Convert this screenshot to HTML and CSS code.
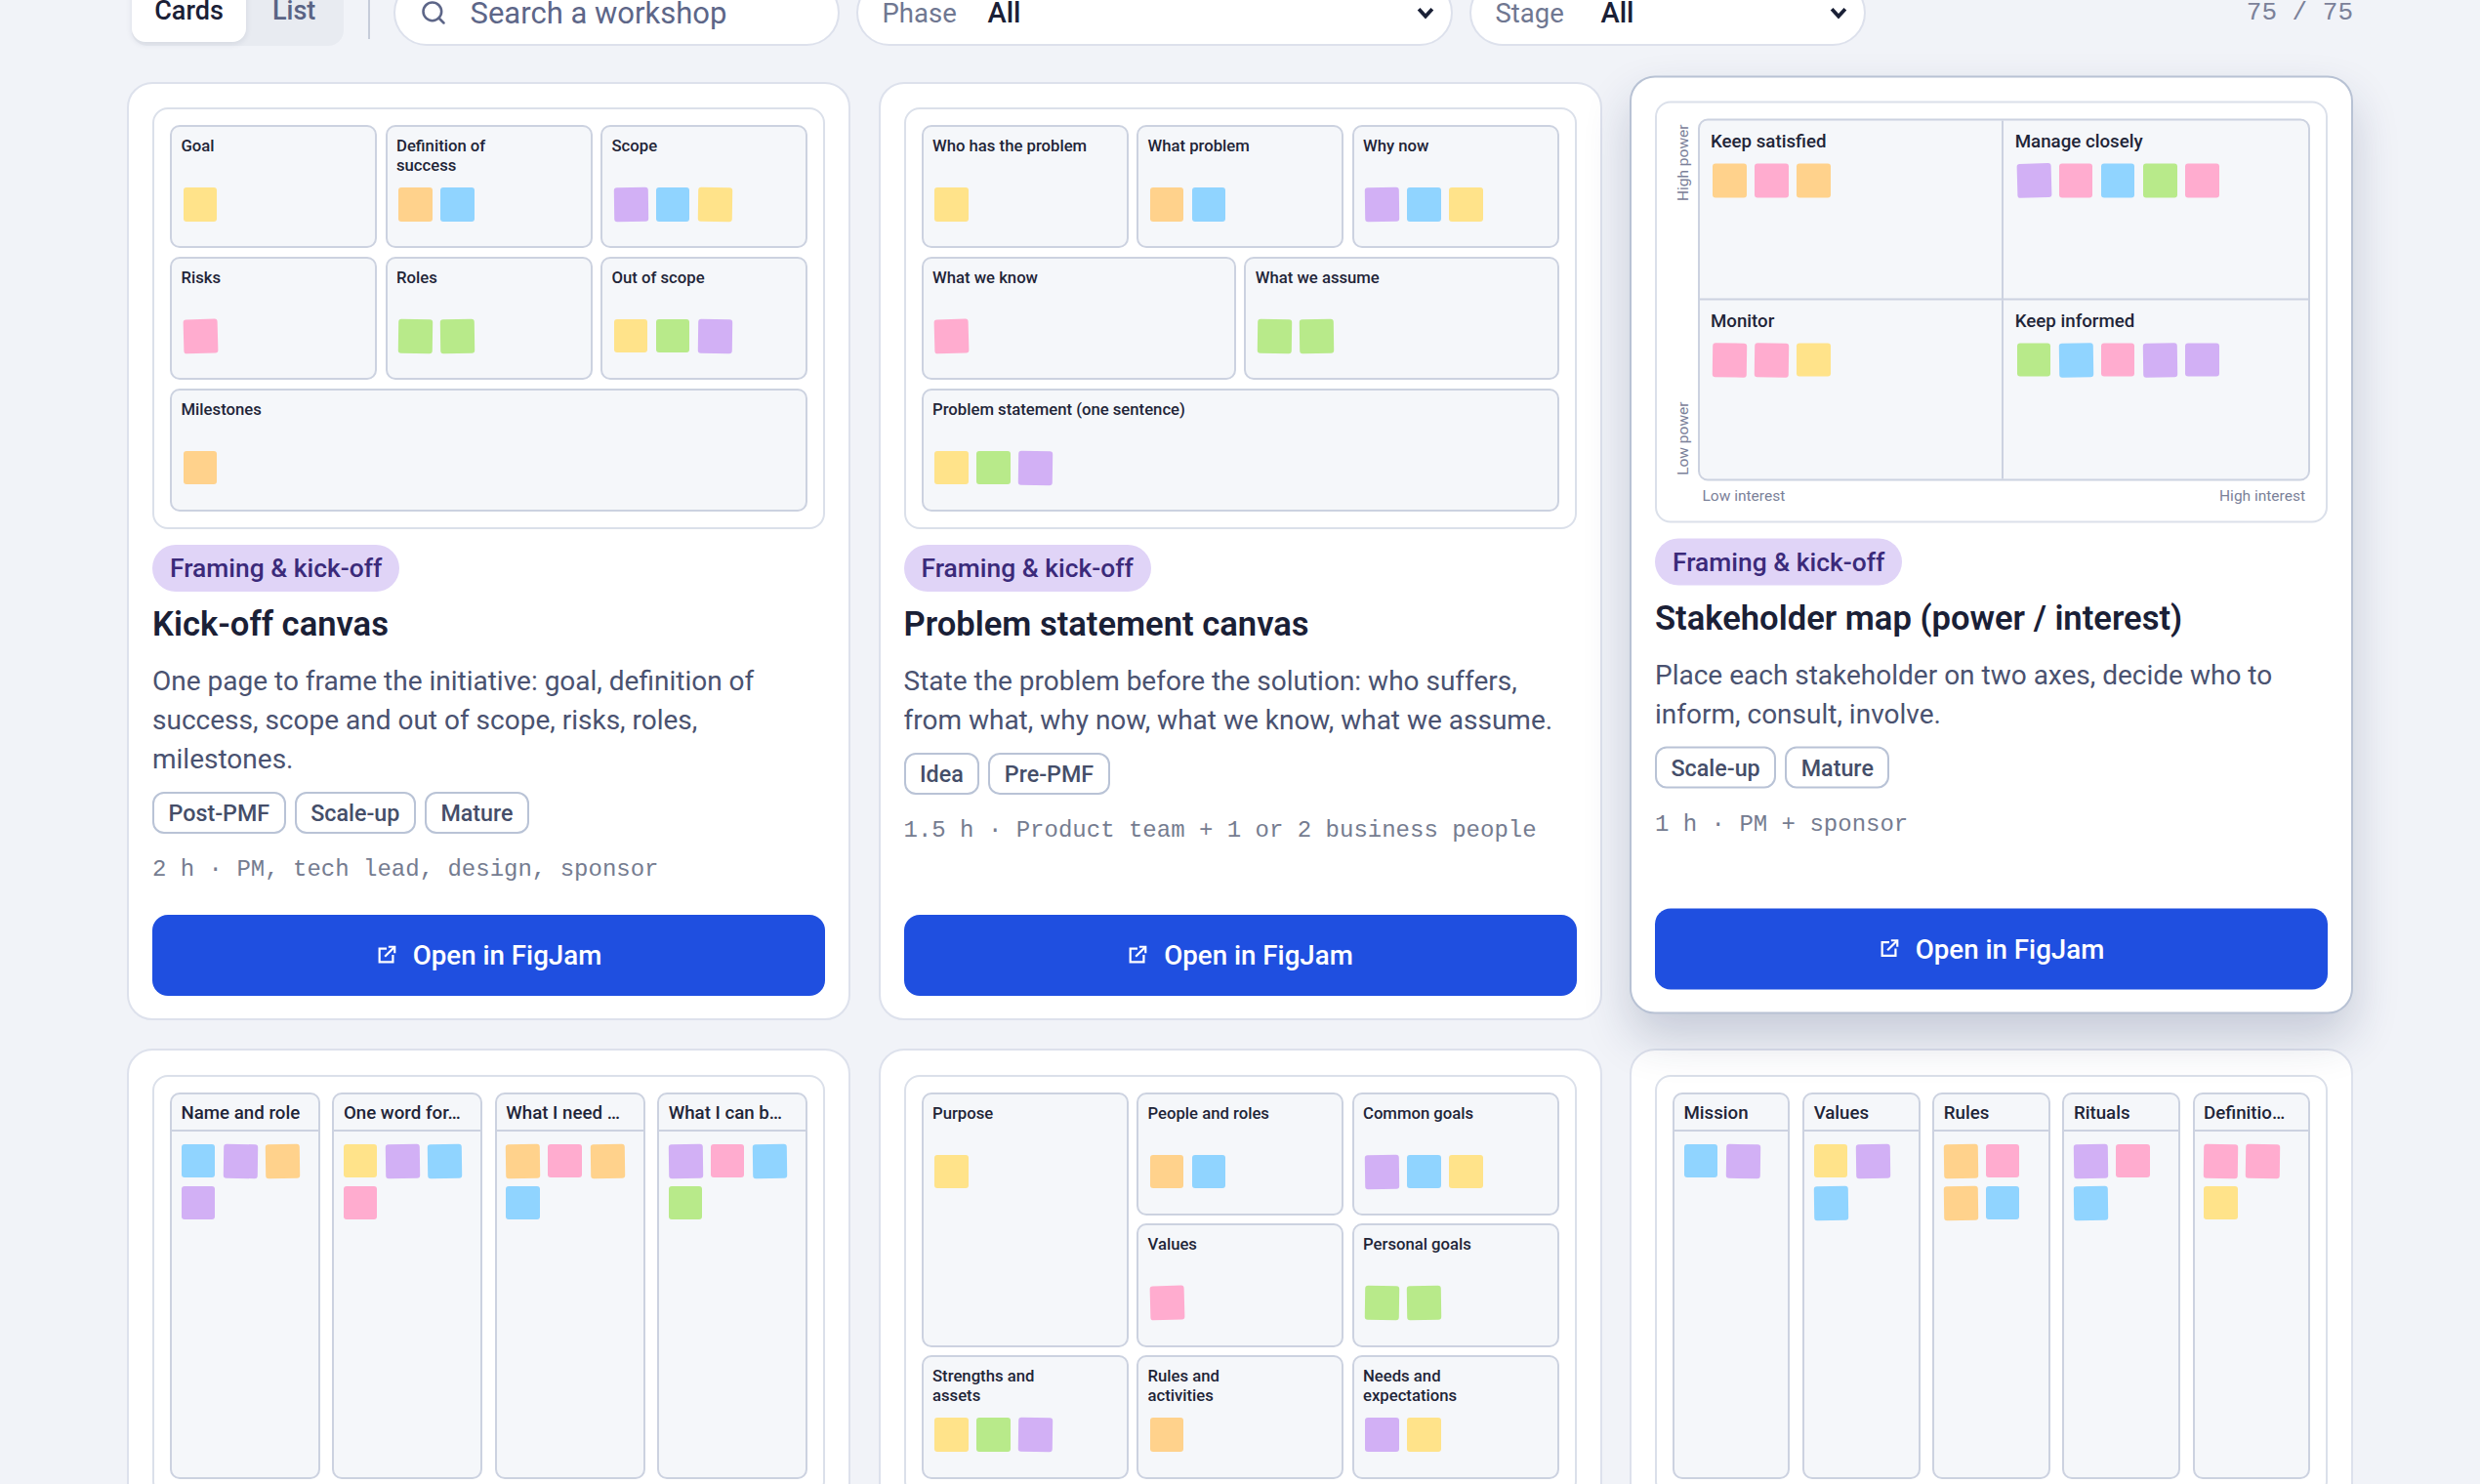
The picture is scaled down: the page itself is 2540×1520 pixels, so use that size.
FILE: index.html
```html
<!DOCTYPE html>
<html lang="en">
	<head>
		<meta charset="utf-8">
		<title>Workshop library</title>
		<link rel="stylesheet" href="styles.css">
	</head>
	<body>
		<div class="page">
			<div class="toolbar">
				<div class="segment">
					<button class="segment-btn active">Cards</button>
					<button class="segment-btn">List</button>
				</div>
				<div class="divider"></div>
				<div class="search">
					<svg class="search-icon" viewBox="0 0 24 24" fill="none" stroke="currentColor" stroke-width="2.2" stroke-linecap="round"><circle cx="11" cy="11" r="8"></circle><path d="M21 21l-4.3-4.3"></path></svg>
					<span>Search a workshop</span>
				</div>
				<div class="select select-phase">
					<span class="select-label">Phase</span>
					<span class="select-value">All</span>
					<svg class="chevron" viewBox="0 0 16 16" fill="none" stroke="currentColor" stroke-width="3"><path d="M2.5 5l5.500 6 5.500-6"></path></svg>
				</div>
				<div class="select select-stage">
					<span class="select-label">Stage</span>
					<span class="select-value">All</span>
					<svg class="chevron" viewBox="0 0 16 16" fill="none" stroke="currentColor" stroke-width="3"><path d="M2.5 5l5.500 6 5.500-6"></path></svg>
				</div>
				<div class="count">75 / 75</div>
			</div>

			<div class="cards">
				<article class="card">
					<div class="preview">
						<div class="board">
							<div class="cell third"><div class="cell-label">Goal</div><div class="stickies"><i class="sticky y"></i></div></div>
							<div class="cell third"><div class="cell-label">Definition of<br>success</div><div class="stickies"><i class="sticky o"></i><i class="sticky b"></i></div></div>
							<div class="cell third"><div class="cell-label">Scope</div><div class="stickies"><i class="sticky p tls"></i><i class="sticky b"></i><i class="sticky y trs"></i></div></div>
							<div class="cell third"><div class="cell-label">Risks</div><div class="stickies"><i class="sticky k tl"></i></div></div>
							<div class="cell third"><div class="cell-label">Roles</div><div class="stickies"><i class="sticky g trs"></i><i class="sticky g tls"></i></div></div>
							<div class="cell third"><div class="cell-label">Out of scope</div><div class="stickies"><i class="sticky y"></i><i class="sticky g"></i><i class="sticky p trs"></i></div></div>
							<div class="cell full"><div class="cell-label">Milestones</div><div class="stickies"><i class="sticky o"></i></div></div>
						</div>
					</div>
					<span class="tag">Framing &amp; kick-off</span>
					<h2 class="title">Kick-off canvas</h2>
					<p class="desc">One page to frame the initiative: goal, definition of success, scope and out of scope, risks, roles, milestones.</p>
					<div class="pills"><span class="pill">Post-PMF</span><span class="pill">Scale-up</span><span class="pill">Mature</span></div>
					<div class="meta">2 h · PM, tech lead, design, sponsor</div>
					<a class="open-btn"><svg class="open-icon" viewBox="0 0 24 24" fill="none" stroke="currentColor" stroke-width="2.4"><path d="M12 5H4v15h15v-8"></path><path d="M10 14L21 3"></path><path d="M14 3h7v7"></path></svg>Open in FigJam</a>
				</article>

				<article class="card">
					<div class="preview">
						<div class="board">
							<div class="cell third"><div class="cell-label">Who has the problem</div><div class="stickies"><i class="sticky y"></i></div></div>
							<div class="cell third"><div class="cell-label">What problem</div><div class="stickies"><i class="sticky o"></i><i class="sticky b"></i></div></div>
							<div class="cell third"><div class="cell-label">Why now</div><div class="stickies"><i class="sticky p tls"></i><i class="sticky b"></i><i class="sticky y"></i></div></div>
							<div class="cell half"><div class="cell-label">What we know</div><div class="stickies"><i class="sticky k tl"></i></div></div>
							<div class="cell half"><div class="cell-label">What we assume</div><div class="stickies"><i class="sticky g trs"></i><i class="sticky g tls"></i></div></div>
							<div class="cell full"><div class="cell-label">Problem statement (one sentence)</div><div class="stickies"><i class="sticky y"></i><i class="sticky g"></i><i class="sticky p trs"></i></div></div>
						</div>
					</div>
					<span class="tag">Framing &amp; kick-off</span>
					<h2 class="title">Problem statement canvas</h2>
					<p class="desc">State the problem before the solution: who suffers, from what, why now, what we know, what we assume.</p>
					<div class="pills"><span class="pill">Idea</span><span class="pill">Pre-PMF</span></div>
					<div class="meta">1.5 h · Product team + 1 or 2 business people</div>
					<a class="open-btn"><svg class="open-icon" viewBox="0 0 24 24" fill="none" stroke="currentColor" stroke-width="2.4"><path d="M12 5H4v15h15v-8"></path><path d="M10 14L21 3"></path><path d="M14 3h7v7"></path></svg>Open in FigJam</a>
				</article>

				<article class="card raised">
					<div class="preview">
						<div class="matrix-wrap">
							<div class="y-axis"><span>High power</span><span>Low power</span></div>
							<div class="matrix">
								<div class="quad"><div class="quad-label">Keep satisfied</div><div class="stickies"><i class="sticky o"></i><i class="sticky k"></i><i class="sticky o"></i></div></div>
								<div class="quad"><div class="quad-label">Manage closely</div><div class="stickies"><i class="sticky p tl"></i><i class="sticky k"></i><i class="sticky b"></i><i class="sticky g"></i><i class="sticky k"></i></div></div>
								<div class="quad"><div class="quad-label">Monitor</div><div class="stickies"><i class="sticky k trs"></i><i class="sticky k trs"></i><i class="sticky y"></i></div></div>
								<div class="quad"><div class="quad-label">Keep informed</div><div class="stickies"><i class="sticky g"></i><i class="sticky b tls"></i><i class="sticky k"></i><i class="sticky p tls"></i><i class="sticky p"></i></div></div>
							</div>
							<div class="x-axis"><span>Low interest</span><span>High interest</span></div>
						</div>
					</div>
					<span class="tag">Framing &amp; kick-off</span>
					<h2 class="title">Stakeholder map (power / interest)</h2>
					<p class="desc">Place each stakeholder on two axes, decide who to inform, consult, involve.</p>
					<div class="pills"><span class="pill">Scale-up</span><span class="pill">Mature</span></div>
					<div class="meta">1 h · PM + sponsor</div>
					<a class="open-btn"><svg class="open-icon" viewBox="0 0 24 24" fill="none" stroke="currentColor" stroke-width="2.4"><path d="M12 5H4v15h15v-8"></path><path d="M10 14L21 3"></path><path d="M14 3h7v7"></path></svg>Open in FigJam</a>
				</article>

				<article class="card">
					<div class="preview">
						<div class="columns">
							<div class="col"><div class="col-head">Name and role</div><div class="col-body"><i class="sticky b"></i><i class="sticky p trs"></i><i class="sticky o tls"></i><i class="sticky p"></i></div></div>
							<div class="col"><div class="col-head">One word for…</div><div class="col-body"><i class="sticky y"></i><i class="sticky p tls"></i><i class="sticky b tls"></i><i class="sticky k"></i></div></div>
							<div class="col"><div class="col-head">What I need …</div><div class="col-body"><i class="sticky o tls"></i><i class="sticky k"></i><i class="sticky o tls"></i><i class="sticky b"></i></div></div>
							<div class="col"><div class="col-head">What I can b…</div><div class="col-body"><i class="sticky p tls"></i><i class="sticky k"></i><i class="sticky b tls"></i><i class="sticky g"></i></div></div>
						</div>
					</div>
				</article>

				<article class="card">
					<div class="preview">
						<div class="board">
							<div class="cell third tall"><div class="cell-label">Purpose</div><div class="stickies"><i class="sticky y"></i></div></div>
							<div class="cell third"><div class="cell-label">People and roles</div><div class="stickies"><i class="sticky o"></i><i class="sticky b"></i></div></div>
							<div class="cell third"><div class="cell-label">Common goals</div><div class="stickies"><i class="sticky p tls"></i><i class="sticky b"></i><i class="sticky y"></i></div></div>
							<div class="cell third"><div class="cell-label">Values</div><div class="stickies"><i class="sticky k tl"></i></div></div>
							<div class="cell third"><div class="cell-label">Personal goals</div><div class="stickies"><i class="sticky g trs"></i><i class="sticky g tls"></i></div></div>
							<div class="cell third"><div class="cell-label">Strengths and<br>assets</div><div class="stickies"><i class="sticky y"></i><i class="sticky g"></i><i class="sticky p trs"></i></div></div>
							<div class="cell third"><div class="cell-label">Rules and<br>activities</div><div class="stickies"><i class="sticky o"></i></div></div>
							<div class="cell third"><div class="cell-label">Needs and<br>expectations</div><div class="stickies"><i class="sticky p"></i><i class="sticky y"></i></div></div>
						</div>
					</div>
				</article>

				<article class="card">
					<div class="preview">
						<div class="columns">
							<div class="col"><div class="col-head">Mission</div><div class="col-body"><i class="sticky b"></i><i class="sticky p trs"></i></div></div>
							<div class="col"><div class="col-head">Values</div><div class="col-body"><i class="sticky y"></i><i class="sticky p tls"></i><i class="sticky b tls"></i></div></div>
							<div class="col"><div class="col-head">Rules</div><div class="col-body"><i class="sticky o tls"></i><i class="sticky k"></i><i class="sticky o tls"></i><i class="sticky b"></i></div></div>
							<div class="col"><div class="col-head">Rituals</div><div class="col-body"><i class="sticky p tls"></i><i class="sticky k"></i><i class="sticky b tls"></i></div></div>
							<div class="col"><div class="col-head">Definitio…</div><div class="col-body"><i class="sticky k trs"></i><i class="sticky k trs"></i><i class="sticky y"></i></div></div>
						</div>
					</div>
				</article>
			</div>
		</div>
	</body>
</html>
```

FILE: styles.css
```css
* {
	box-sizing: border-box;
}

html,
body {
	height: 100%;
	margin: 0;
	overflow: hidden;
}

body {
	font-family: Roboto, "Liberation Sans", sans-serif;
	background-color: #f1f3f8;
	color: #1a2036;
}

.page {
	margin-top: -21px;
	padding: 0 130px;
}

/* toolbar, scrolled partly out of view */
.toolbar {
	display: flex;
	align-items: center;
	height: 68px;
	margin-bottom: 36.5px;
}

.segment {
	display: flex;
	width: 217px;
	height: 67px;
	margin-left: 5px;
	padding: 0 0 4px 0;
	background-color: #e8ebf1;
	border-radius: 16px;
}

.segment-btn {
	border: none;
	background: none;
	font: 500 27px Roboto, sans-serif;
	color: #5a6384;
	padding: 0 27px;
}

.segment-btn.active {
	width: 117px;
	padding: 0 22px;
	background-color: #fff;
	color: #1a2036;
	border-radius: 14px;
	box-shadow: 0 2px 6px rgba(30, 40, 80, 0.1);
}

.divider {
	width: 2px;
	height: 54px;
	margin: 0 24px 0 24.5px;
	background-color: #c6ccda;
}

.search,
.select {
	display: flex;
	align-items: center;
	height: 68px;
	background-color: #fff;
	border: 2px solid #dde1ec;
	border-radius: 34px;
	font-size: 27.5px;
}

.search {
	width: 457px;
	padding-left: 25px;
	font-size: 31px;
	color: #5d6688;
}

.search-icon {
	width: 28px;
	height: 28px;
	margin-right: 24px;
}

.select {
	margin-left: 17px;
	padding: 0 16px 0 25px;
}

.select-phase {
	width: 611px;
}

.select-stage {
	width: 406px;
}

.select-label {
	color: #6f7791;
	width: 108px;
}

.select-value {
	font-size: 29px;
	font-weight: 500;
	color: #1a2036;
	flex: 1;
}

.chevron {
	width: 20px;
	height: 20px;
	color: #1a2036;
}

.count {
	margin-left: auto;
	font: 26px "Liberation Mono", monospace;
	color: #7b8199;
}

/* cards */
.cards {
	display: grid;
	grid-template-columns: repeat(3, 1fr);
	gap: 29px 28.5px;
}

.card {
	display: flex;
	flex-direction: column;
	align-items: flex-start;
	height: 961.5px;
	padding: 24.5px 24px 23.5px;
	background-color: #fff;
	border: 2px solid #dde1ec;
	border-radius: 26px;
}

.card.raised {
	position: relative;
	z-index: 1;
	transform: translateY(-6.5px);
	border-color: #b8c2d4;
	box-shadow: 0 24px 48px rgba(30, 45, 90, 0.2);
}

.preview {
	width: 100%;
	height: 432px;
	padding: 16px;
	flex-shrink: 0;
	background-color: #fff;
	border: 2px solid #dbe0ea;
	border-radius: 16px;
}

.board {
	display: grid;
	grid-template-columns: repeat(6, 1fr);
	grid-template-rows: repeat(3, 1fr);
	gap: 8.5px;
	height: 100%;
}

.cell {
	min-width: 0;
	padding: 10px 9.5px;
	background-color: #f5f7fa;
	border: 2px solid #ccd2e0;
	border-radius: 10px;
}

.third {
	grid-column: span 2;
}

.half {
	grid-column: span 3;
}

.full {
	grid-column: span 6;
}

.tall {
	grid-row: span 2;
}

.cell-label {
	min-height: 39px;
	margin-bottom: 13px;
	font-size: 16.7px;
	font-weight: 500;
	line-height: 19.5px;
	color: #1f2538;
}

.stickies,
.col-body {
	display: flex;
	flex-wrap: wrap;
	gap: 8.6px;
}

.stickies {
	padding-left: 2px;
}

.sticky {
	display: block;
	width: 34.5px;
	height: 34.5px;
	border-radius: 3px;
}

.y { background-color: #ffe38a; }
.o { background-color: #ffd28c; }
.b { background-color: #90d4ff; }
.p { background-color: #d2b0f5; }
.k { background-color: #ffaccf; }
.g { background-color: #b8ea8a; }

.tl { transform: rotate(-1.5deg); }
.tr { transform: rotate(1.5deg); }
.tls { transform: rotate(-0.8deg); }
.trs { transform: rotate(0.8deg); }

/* stakeholder matrix */
.matrix-wrap {
	display: grid;
	grid-template-columns: 25.5px 1fr;
	grid-template-rows: 1fr 25px;
	height: 100%;
}

.y-axis {
	display: flex;
	flex-direction: column;
	justify-content: space-between;
	align-items: flex-start;
	padding: 6px 0;
	font-size: 15.5px;
	color: #7b8199;
}

.y-axis span {
	writing-mode: vertical-rl;
	transform: rotate(180deg);
	line-height: 22px;
}

.matrix {
	display: grid;
	grid-template-columns: 1fr 1fr;
	grid-template-rows: 1fr 1fr;
	background-color: #f5f7fa;
	border: 2px solid #ccd2e0;
	border-radius: 10px;
}

.quad {
	padding: 10px 11.5px;
}

.quad:nth-child(odd) {
	border-right: 2px solid #ccd2e0;
}

.quad:nth-child(-n+2) {
	border-bottom: 2px solid #ccd2e0;
}

.quad-label {
	margin-bottom: 12px;
	font-size: 18.7px;
	font-weight: 500;
	line-height: 22px;
	color: #1f2538;
}

.x-axis {
	grid-column: 2;
	display: flex;
	justify-content: space-between;
	padding: 4px 5px 0 5px;
	font-size: 15.5px;
	line-height: 22px;
	color: #7b8199;
}

/* kanban style previews */
.columns {
	display: flex;
	gap: 12.7px;
	height: 100%;
}

.col {
	flex: 1;
	min-width: 0;
	background-color: #f5f7fa;
	border: 2px solid #ccd2e0;
	border-radius: 10px;
}

.col-head {
	height: 38px;
	padding: 1px 9.5px 0;
	font-size: 18.7px;
	font-weight: 500;
	line-height: 36px;
	white-space: nowrap;
	overflow: hidden;
	color: #1f2538;
	border-bottom: 2px solid #ccd2e0;
}

.col-body {
	padding: 13px 9.5px;
}

/* card text */
.tag {
	display: flex;
	align-items: center;
	height: 48px;
	margin-top: 16px;
	padding: 0 18px;
	background-color: #e0d4f7;
	border-radius: 24px;
	font-size: 26.4px;
	font-weight: 500;
	color: #3b2a7a;
}

.title {
	margin: 12.5px 0 0 0;
	font-size: 34.6px;
	font-weight: 600;
	line-height: 40px;
	color: #1a2036;
}

.desc {
	margin: 19.5px 0 0 0;
	font-size: 28px;
	line-height: 40px;
	color: #4a5270;
}

.pills {
	display: flex;
	gap: 9px;
	margin-top: 13px;
}

.pill {
	display: flex;
	align-items: center;
	height: 43px;
	padding: 0 14.5px;
	border: 2px solid #b9c3d6;
	border-radius: 12px;
	font-size: 23.3px;
	font-weight: 500;
	color: #454e69;
}

.meta {
	margin-top: 19px;
	font-family: "Liberation Mono", monospace;
	font-size: 24px;
	line-height: 36px;
	color: #757c90;
}

.open-btn {
	display: flex;
	align-items: center;
	justify-content: center;
	gap: 16px;
	width: 100%;
	height: 83px;
	margin-top: auto;
	flex-shrink: 0;
	background-color: #1f4fe0;
	border-radius: 16px;
	font-size: 27.7px;
	font-weight: 500;
	color: #fff;
}

.open-icon {
	width: 22px;
	height: 22px;
}
```
